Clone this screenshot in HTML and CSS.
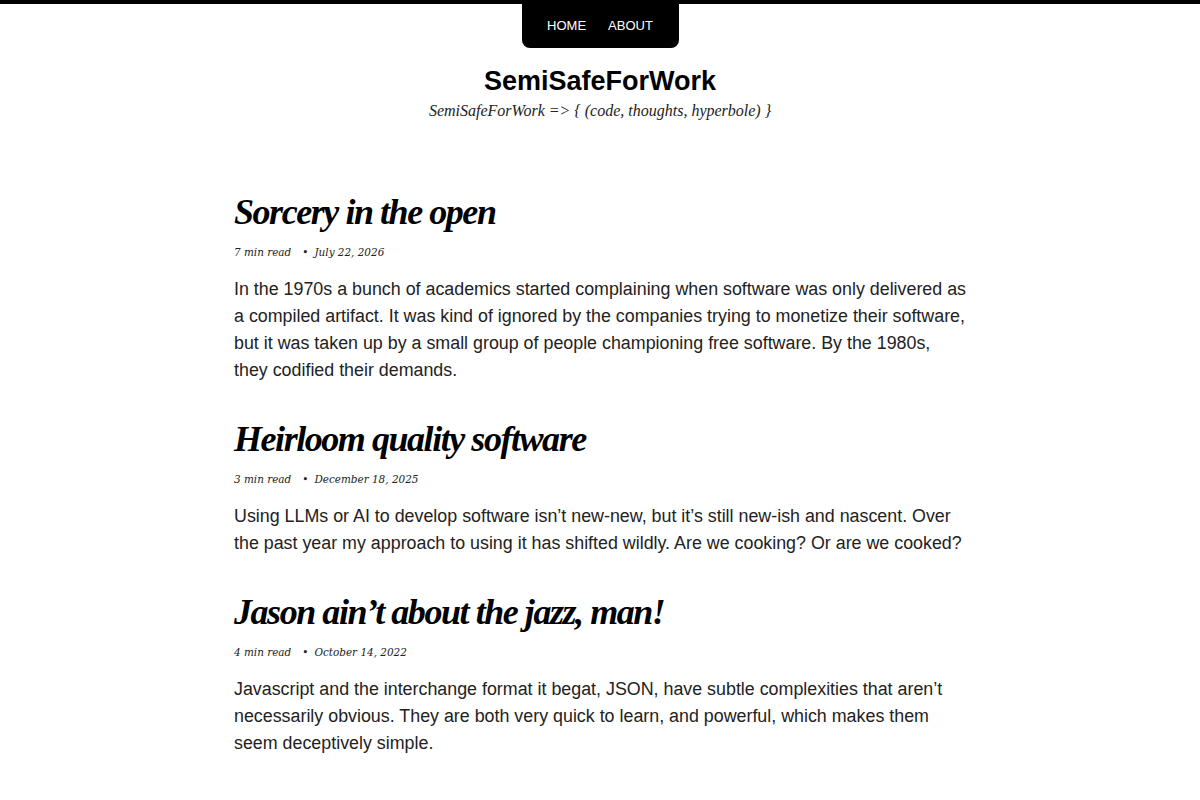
FILE: index.html
```html
<!DOCTYPE html>
<html>
<head>
<meta charset="utf-8">
<link rel="stylesheet" href="styles.css">
</head>
<body>
<div class="topline"></div>
<nav class="nav">
  <a href="#" class="nav-link">HOME</a>
  <a href="#" class="nav-link">ABOUT</a>
</nav>
<header class="masthead">
  <h1 class="site-title">SemiSafeForWork</h1>
  <p class="site-tagline">SemiSafeForWork =&gt; { (code, thoughts, hyperbole) }</p>
</header>
<main class="posts">
  <article class="post">
    <h2 class="post-title">Sorcery in the open</h2>
    <div class="post-meta"><span>7 min read</span><span class="dot">•</span><span>July 22, 2026</span></div>
    <p class="post-excerpt">In the 1970s a bunch of academics started complaining when software was only delivered as a compiled artifact. It was kind of ignored by the companies trying to monetize their software, but it was taken up by a small group of people championing free software. By the 1980s, they codified their demands.</p>
  </article>
  <article class="post">
    <h2 class="post-title">Heirloom quality software</h2>
    <div class="post-meta"><span>3 min read</span><span class="dot">•</span><span>December 18, 2025</span></div>
    <p class="post-excerpt">Using LLMs or AI to develop software isn’t new-new, but it’s still new-ish and nascent. Over the past year my approach to using it has shifted wildly. Are we cooking? Or are we cooked?</p>
  </article>
  <article class="post">
    <h2 class="post-title">Jason ain’t about the jazz, man!</h2>
    <div class="post-meta"><span>4 min read</span><span class="dot">•</span><span>October 14, 2022</span></div>
    <p class="post-excerpt">Javascript and the interchange format it begat, JSON, have subtle complexities that aren’t necessarily obvious. They are both very quick to learn, and powerful, which makes them seem deceptively simple.</p>
  </article>
</main>
</body>
</html>
```

FILE: styles.css
```css
html, body {
  margin: 0;
  padding: 0;
  background: #fff;
}
body {
  font-family: "Liberation Sans", Arial, sans-serif;
  color: #000;
}
.topline {
  height: 4px;
  background: #000;
}
.nav {
  width: 157px;
  height: 48px;
  margin: -4px auto 0;
  background: #000;
  border-radius: 0 0 8px 8px;
  display: flex;
  justify-content: center;
  align-items: center;
  gap: 22px;
  box-sizing: border-box;
  padding-top: 3px;
}
.nav-link {
  color: #fff;
  text-decoration: none;
  font-size: 13px;
  font-family: "Liberation Sans", Arial, sans-serif;
}
.masthead {
  text-align: center;
  margin-top: 18px;
}
.site-title {
  margin: 0;
  font-size: 27px;
  line-height: 30px;
  font-weight: bold;
}
.site-tagline {
  margin: 0;
  font-family: "Liberation Serif", "Times New Roman", serif;
  font-style: italic;
  font-size: 16px;
  line-height: 30px;
  color: #222;
}
.posts {
  width: 736px;
  margin: 64px auto 0;
  padding-left: 2px;
  box-sizing: border-box;
}
.post {
  margin-bottom: 33px;
}
.post-title {
  margin: 0;
  font-family: "Liberation Serif", "Times New Roman", serif;
  font-style: italic;
  font-weight: bold;
  font-size: 36px;
  line-height: 44px;
  letter-spacing: -1.45px;
}
.post-meta {
  margin-top: 10px;
  font-family: "DejaVu Serif", serif;
  font-stretch: condensed;
  font-style: italic;
  font-size: 11.6px;
  line-height: 16px;
  color: #222;
}
.dot {
  margin: 0 6px 0 11px;
}
.post-excerpt {
  margin: 16px 0 0;
  font-size: 17.85px;
  line-height: 27px;
  color: #222;
}
```
